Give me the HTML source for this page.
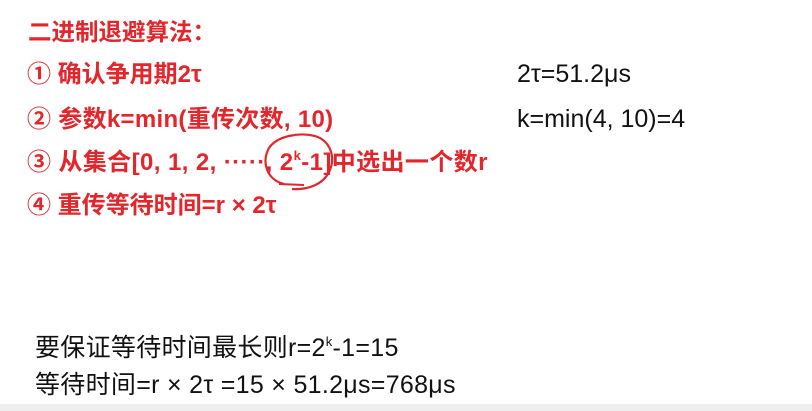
<!DOCTYPE html>
<html><head><meta charset="utf-8"><style>
html,body{margin:0;padding:0;width:812px;height:411px;background:#fff;overflow:hidden;position:relative}
.r{position:absolute;color:#e3262b;font-family:"Liberation Sans","Noto Sans CJK SC",sans-serif;font-weight:bold;font-size:24px;white-space:nowrap;line-height:1}
.b{position:absolute;color:#111;font-family:"Liberation Sans","Noto Sans CJK SC",sans-serif;font-size:25px;white-space:nowrap;line-height:1}
sup{font-size:13px;vertical-align:10px;line-height:0}
</style></head><body>
<div class="r" style="left:28px;top:21px;font-size:23.5px">二进制退避算法：</div>
<div class="r" style="left:27px;top:63px">① 确认争用期2τ</div>
<div class="r" style="left:27px;top:108px;letter-spacing:0.3px">② 参数k=min(重传次数, 10)</div>
<div class="r" style="left:27px;top:151px;letter-spacing:0.4px">③ 从集合[0, 1, 2, ·····, 2<sup>k</sup>-1]中选出一个数r</div>
<div class="r" style="left:27px;top:194px">④ 重传等待时间=r × 2τ</div>
<div class="b" style="left:517px;top:62px">2τ=51.2μs</div>
<div class="b" style="left:517px;top:107px">k=min(4, 10)=4</div>
<div class="b" style="left:35px;top:336px;letter-spacing:0.3px">要保证等待时间最长则r=2<sup>k</sup>-1=15</div>
<div class="b" style="left:35px;top:373px;letter-spacing:0.3px">等待时间=r × 2τ =15 × 51.2μs=768μs</div>
<svg style="position:absolute;left:0;top:0" width="812" height="411">
<g transform="translate(9,0)">
<path d="M275 184 C258 180 252 162 260 148 C268 136 290 132 306 136 C322 141 327 158 320 172 C314 184 300 190 283 189" fill="none" stroke="#e3262b" stroke-width="2.2"/>
<path d="M270 184 L295 185" stroke="#e3262b" stroke-width="2"/>
</g>
<rect x="0" y="404" width="812" height="7" fill="#eeeeee"/>
</svg>
</body></html>
